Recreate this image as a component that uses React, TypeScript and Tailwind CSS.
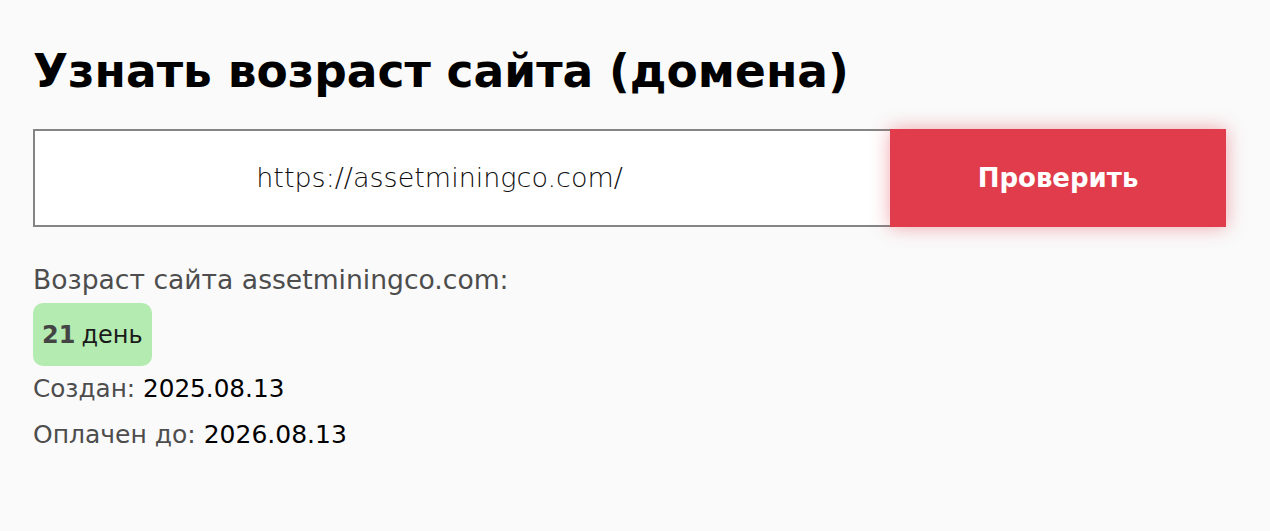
import React from "react";

export default function App() {
  return (
    <div className="min-h-[531px] w-full bg-[#fafafa] px-[33px] pt-[38px] font-['DejaVu_Sans',sans-serif]">
      <h1 className="text-[45.5px] font-bold leading-[68px] text-black">
        Узнать возраст сайта (домена)
      </h1>
      <div className="mt-[23px] flex h-[98px] w-[1193px]">
        <div className="flex flex-1 items-center justify-center border-2 border-r-0 border-[#858585] bg-white pr-[46px] text-[27px] font-light text-[#0d0d0d]">
          https://assetminingco.com/
        </div>
        <button className="flex w-[336px] items-center justify-center bg-[#e03c4b] text-[26px] font-bold text-white shadow-[0_0_18px_rgba(224,60,75,0.45)]">
          Проверить
        </button>
      </div>
      <div className="mt-[38px] text-[26.6px] leading-[30px] text-[#4d4d4d]">
        Возраст сайта assetminingco.com:
      </div>
      <div className="mt-[8px] inline-flex h-[63px] items-center rounded-[10px] bg-[#b3ebb0] px-[9px] text-[24px]">
        <span className="font-bold text-[#444]">21</span>
        <span className="ml-[6px] text-[#1a1a1a]">день</span>
      </div>
      <div className="mt-[8px] text-[24.7px] leading-[30px] text-[#4d4d4d]">
        Создан: <span className="text-black">2025.08.13</span>
      </div>
      <div className="mt-[16px] text-[25px] leading-[30px] text-[#4d4d4d]">
        Оплачен до: <span className="text-black">2026.08.13</span>
      </div>
    </div>
  );
}
